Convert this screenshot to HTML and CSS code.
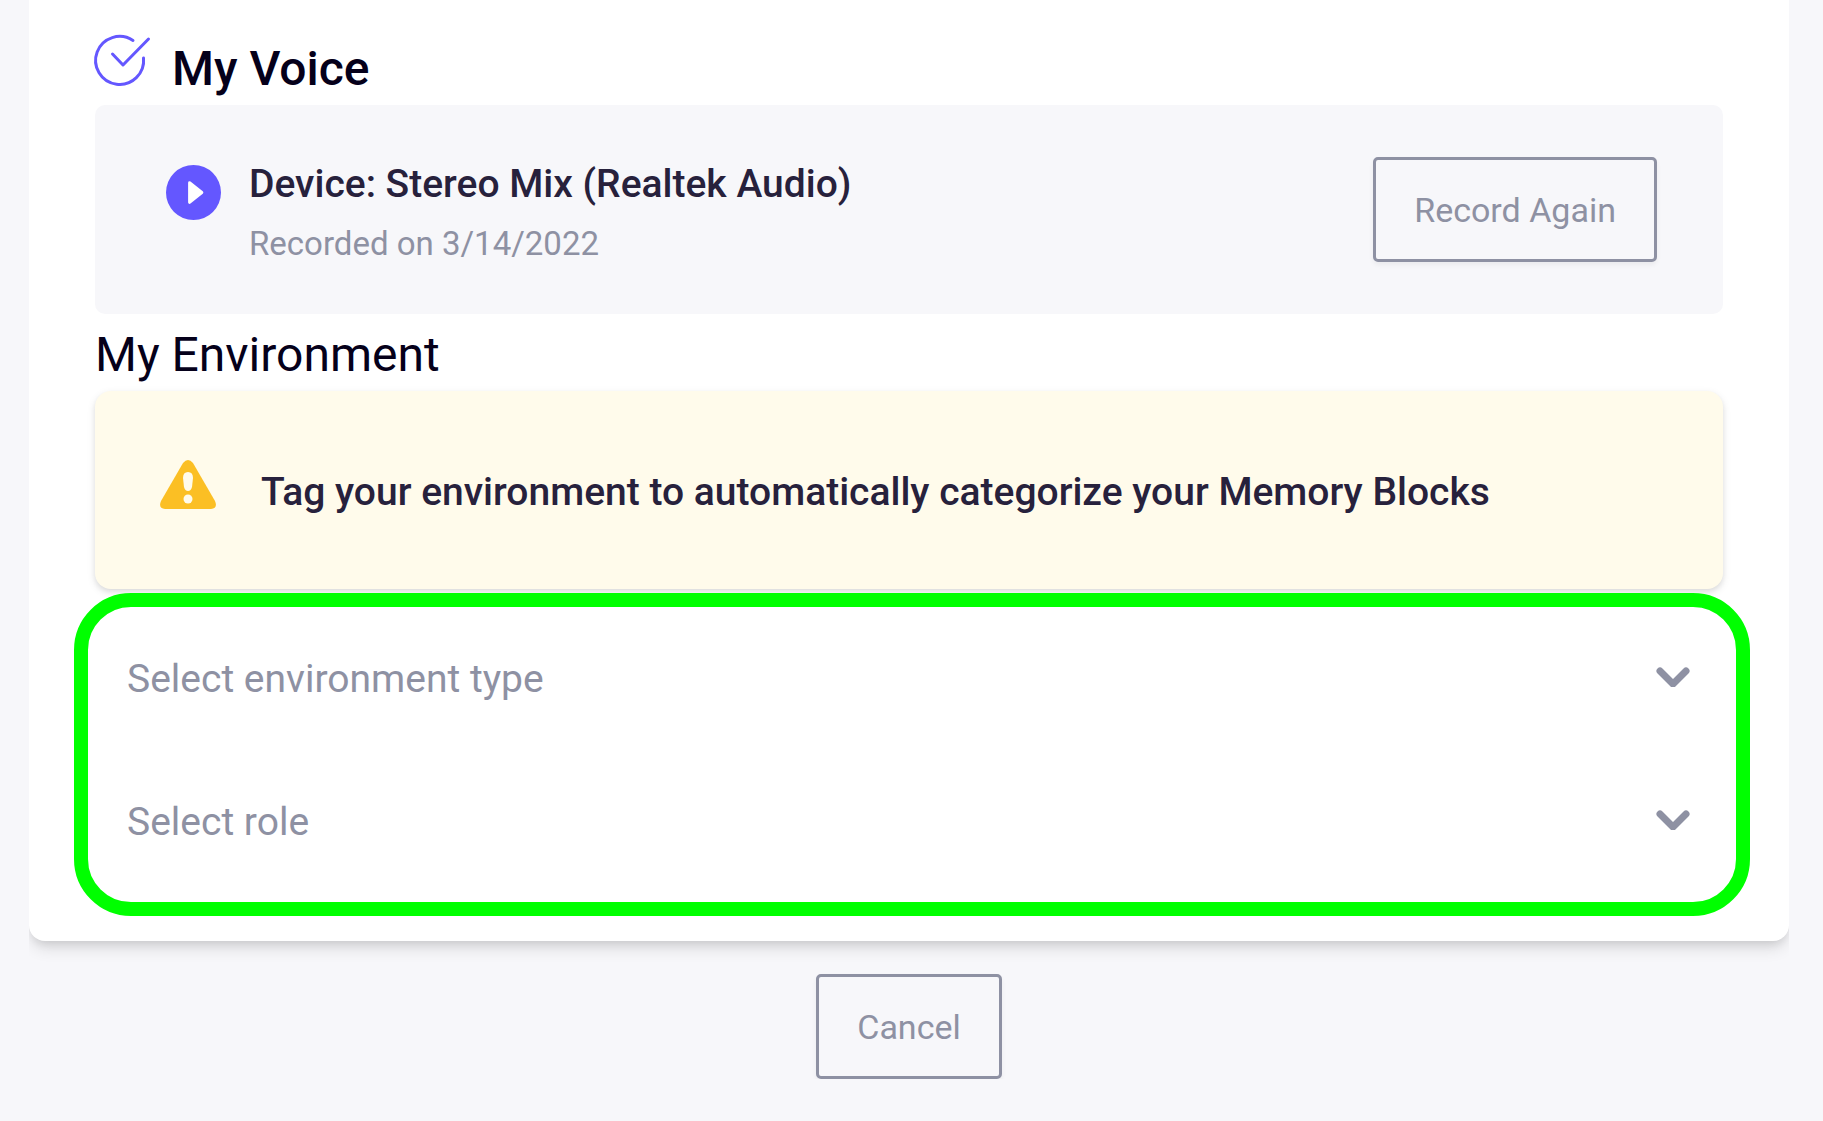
FILE: index.html
```html
<!DOCTYPE html>
<html lang="en">
<head>
    <meta charset="UTF-8">
    <title>My Voice</title>
    <link rel="stylesheet" href="styles.css">
</head>
<body>
    <div class="card">
        <div class="heading">
            <svg class="check" viewBox="0 0 56 60" aria-hidden="true">
                <path d="M38 7.500 A24 24 0 1 0 48.500 25"/>
                <path d="M17.500 21 L28 32 L53.500 6"/>
            </svg>
            <h2 class="title done">My Voice</h2>
        </div>

        <div class="voice">
            <button class="play" type="button" aria-label="Play">
                <svg viewBox="0 0 56 56" aria-hidden="true">
                    <circle cx="28" cy="28" r="28"/>
                    <path d="M24 18 L36.500 28 L24 38 Z"/>
                </svg>
            </button>
            <div class="info">
                <p class="device">Device: Stereo Mix (Realtek Audio)</p>
                <p class="date">Recorded on 3/14/2022</p>
            </div>
            <button class="btn" type="button">Record Again</button>
        </div>

        <h2 class="title environment">My Environment</h2>

        <div class="alert">
            <svg class="warning" viewBox="0 0 56 60" aria-hidden="true">
                <path class="triangle" d="M23 3 Q28 -3 33 3 L55 41 Q58 48 51 49 H5 Q-2 48 1 41 Z"/>
                <path class="mark" d="M23 18 Q23 12 28 12 Q33 12 33 18 L32 27 Q31 31 28 31 Q25 31 24 27 Z"/>
                <circle class="mark" cx="28" cy="39" r="4.500"/>
            </svg>
            <p>Tag your environment to automatically categorize your Memory Blocks</p>
        </div>

        <div class="selects">
            <div class="field">
                <select aria-label="Environment type">
                    <option>Select environment type</option>
                </select>
                <svg class="arrow" viewBox="0 0 34 20" aria-hidden="true"><path d="M4 4 L17 17 L30 4"/></svg>
            </div>
            <div class="field">
                <select aria-label="Role">
                    <option>Select role</option>
                </select>
                <svg class="arrow" viewBox="0 0 34 20" aria-hidden="true"><path d="M4 4 L17 17 L30 4"/></svg>
            </div>
        </div>
    </div>

    <div class="footer">
        <button class="btn" type="button">Cancel</button>
    </div>
</body>
</html>
```
FILE: styles.css
```css
*{
    margin: 0;
    padding: 0;
    box-sizing: border-box;
}

body{
    padding: 0 34px 0 29px;
    background-color: #f7f7fa;
    color: #27213c;
    font-family: Roboto, "Liberation Sans", sans-serif;
}

/*card runs on from above, only the bottom corners are rounded*/
.card{
    padding: 33px 66px 25px;
    background-color: #fff;
    border-radius: 0 0 16px 16px;
    box-shadow: 0 10px 16px -3px rgba(0, 0, 0, 0.12), 0 5px 10px -3px rgba(0, 0, 0, 0.1);
    /*keep the shadow below the card only*/
    clip-path: inset(0 0 -40px 0);
}

.heading{
    display: flex;
    gap: 21px;
}

.check{
    width: 56px;
    height: 60px;
    overflow: visible;
    fill: none;
    stroke: #6457ff;
    stroke-width: 3;
    stroke-linecap: round;
    stroke-linejoin: round;
}

.title{
    color: #05001a;
    font-size: 48px;
    font-weight: 400;
    line-height: 72px;
}

.done{
    font-weight: 500;
}

.environment{
    margin-top: 5px;
}

.voice{
    display: flex;
    align-items: flex-start;
    padding: 49px 66px 40px 71px;
    background-color: #f7f7fa;
    border-radius: 10px;
}

.play{
    width: 55px;
    height: 55px;
    margin: 11px 28px 0 0;
    background: none;
    border: none;
    cursor: pointer;
}

.play svg{
    display: block;
    fill: #6457ff;
}

.play path{
    fill: #fff;
    stroke: #fff;
    stroke-width: 3;
    stroke-linejoin: round;
}

.info{
    flex: 1;
    line-height: 60px;
}

.device{
    font-size: 39px;
    font-weight: 500;
}

.date{
    color: #8e91a3;
    font-size: 33px;
}

.btn{
    height: 105px;
    padding: 0 38px;
    background: none;
    border: 3px solid #8e91a3;
    border-radius: 5px;
    box-shadow: 0 3px 5px rgba(0, 0, 0, 0.05);
    color: #8e91a3;
    font-family: inherit;
    font-size: 34px;
    cursor: pointer;
}

.voice .btn{
    margin-top: 3px;
}

.alert{
    display: flex;
    align-items: flex-start;
    gap: 45px;
    padding: 69px 65px 65px;
    background-color: #fffbeb;
    border-radius: 16px;
    box-shadow: 0 3px 8px rgba(0, 0, 0, 0.1), 0 3px 5px rgba(0, 0, 0, 0.06);
    font-size: 39px;
    font-weight: 500;
    line-height: 64px;
}

.warning{
    width: 56px;
    height: 60px;
}

.triangle{
    fill: #fbbf24;
}

.mark{
    fill: #fffbeb;
}

/*green frame reaches past the card's inner edges*/
.selects{
    margin: 4px -27px 0 -21px;
    padding-bottom: 9px;
    background-color: #fff;
    border: 14px solid #0f0;
    border-radius: 57px;
}

.field{
    position: relative;
}

.field select{
    display: block;
    width: 100%;
    height: 143px;
    padding: 0 100px 0 39px;
    appearance: none;
    background: none;
    border: none;
    color: #8e91a3;
    font-family: inherit;
    font-size: 39px;
}

.arrow{
    position: absolute;
    top: 60px;
    right: 46px;
    width: 34px;
    height: 20px;
    fill: none;
    stroke: #8e91a3;
    stroke-width: 7;
    stroke-linecap: round;
    stroke-linejoin: round;
    pointer-events: none;
}

.footer{
    margin-top: 33px;
    text-align: center;
}
```
